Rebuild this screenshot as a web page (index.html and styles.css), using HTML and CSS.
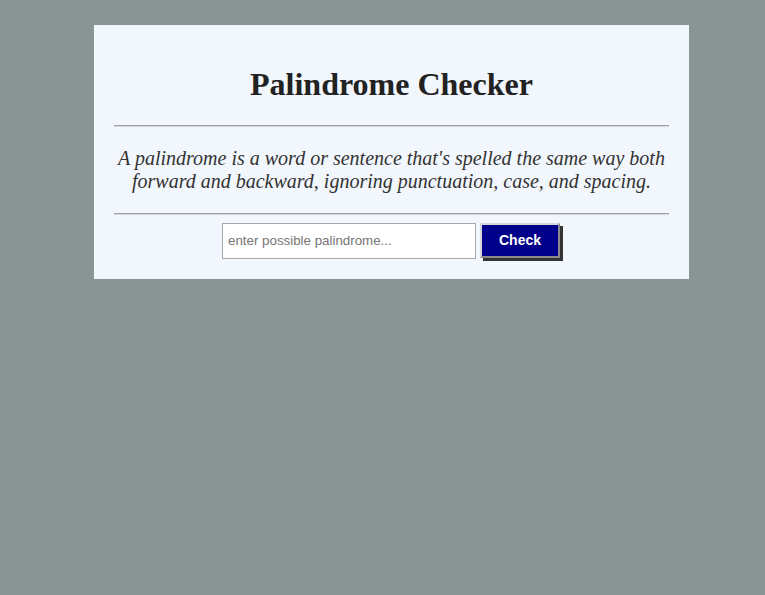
FILE: index.html
```html
<!DOCTYPE html>
<html lang="en">
<head>
<meta charset="utf-8">
<title>Palindrome Checker</title>
<link rel="stylesheet" href="styles.css">
</head>
<body>
<main class="card">
  <h1 class="title">Palindrome Checker</h1>
  <hr class="rule">
  <p class="intro">A palindrome is a word or sentence that's spelled the same way both forward and backward, ignoring punctuation, case, and spacing.</p>
  <hr class="rule">
  <form class="checker">
    <input class="text-input" type="text" placeholder="enter possible palindrome...">
    <button class="check-btn" type="button">Check</button>
  </form>
</main>
</body>
</html>
```

FILE: styles.css
```css
html, body {
  margin: 0;
  padding: 0;
  background: #899494;
  font-family: "Liberation Serif", "Times New Roman", serif;
}

.card {
  box-sizing: border-box;
  width: 595px;
  margin: 25px 0 0 94px;
  padding: 20px;
  background: #f2f6fd;
  text-align: center;
}

.title {
  margin: 21.44px 0;
  font-size: 32px;
  font-weight: bold;
  line-height: 37px;
  color: #222;
}

.rule {
  margin: 8px 0;
  height: 0;
  border: 0;
  border-top: 1px solid #a0a0a0;
  border-bottom: 1px solid #d8d8d8;
}

.intro {
  margin: 20px 0;
  font-size: 20px;
  line-height: 23px;
  font-style: italic;
  color: #333;
}

.checker {
  display: flex;
  justify-content: center;
  align-items: flex-start;
  gap: 4px;
  margin: 0;
  padding-right: 1px;
}

.text-input {
  box-sizing: border-box;
  width: 254px;
  height: 36px;
  padding: 0 5px;
  border: 1px solid #a9a9a9;
  background: #fff;
  font-family: "Liberation Sans", Arial, sans-serif;
  font-size: 13.333px;
  color: #222;
  outline: none;
}

.text-input::placeholder {
  color: #757575;
}

.check-btn {
  box-sizing: border-box;
  width: 80px;
  height: 35px;
  padding: 0;
  border: 2px solid;
  border-color: #d6d6d6 #8a8a8a #8a8a8a #d6d6d6;
  background: #00008b;
  color: #fff;
  font-family: "Liberation Sans", Arial, sans-serif;
  font-size: 14px;
  font-weight: bold;
  box-shadow: 3px 3px 0 #333;
  cursor: pointer;
}
```
